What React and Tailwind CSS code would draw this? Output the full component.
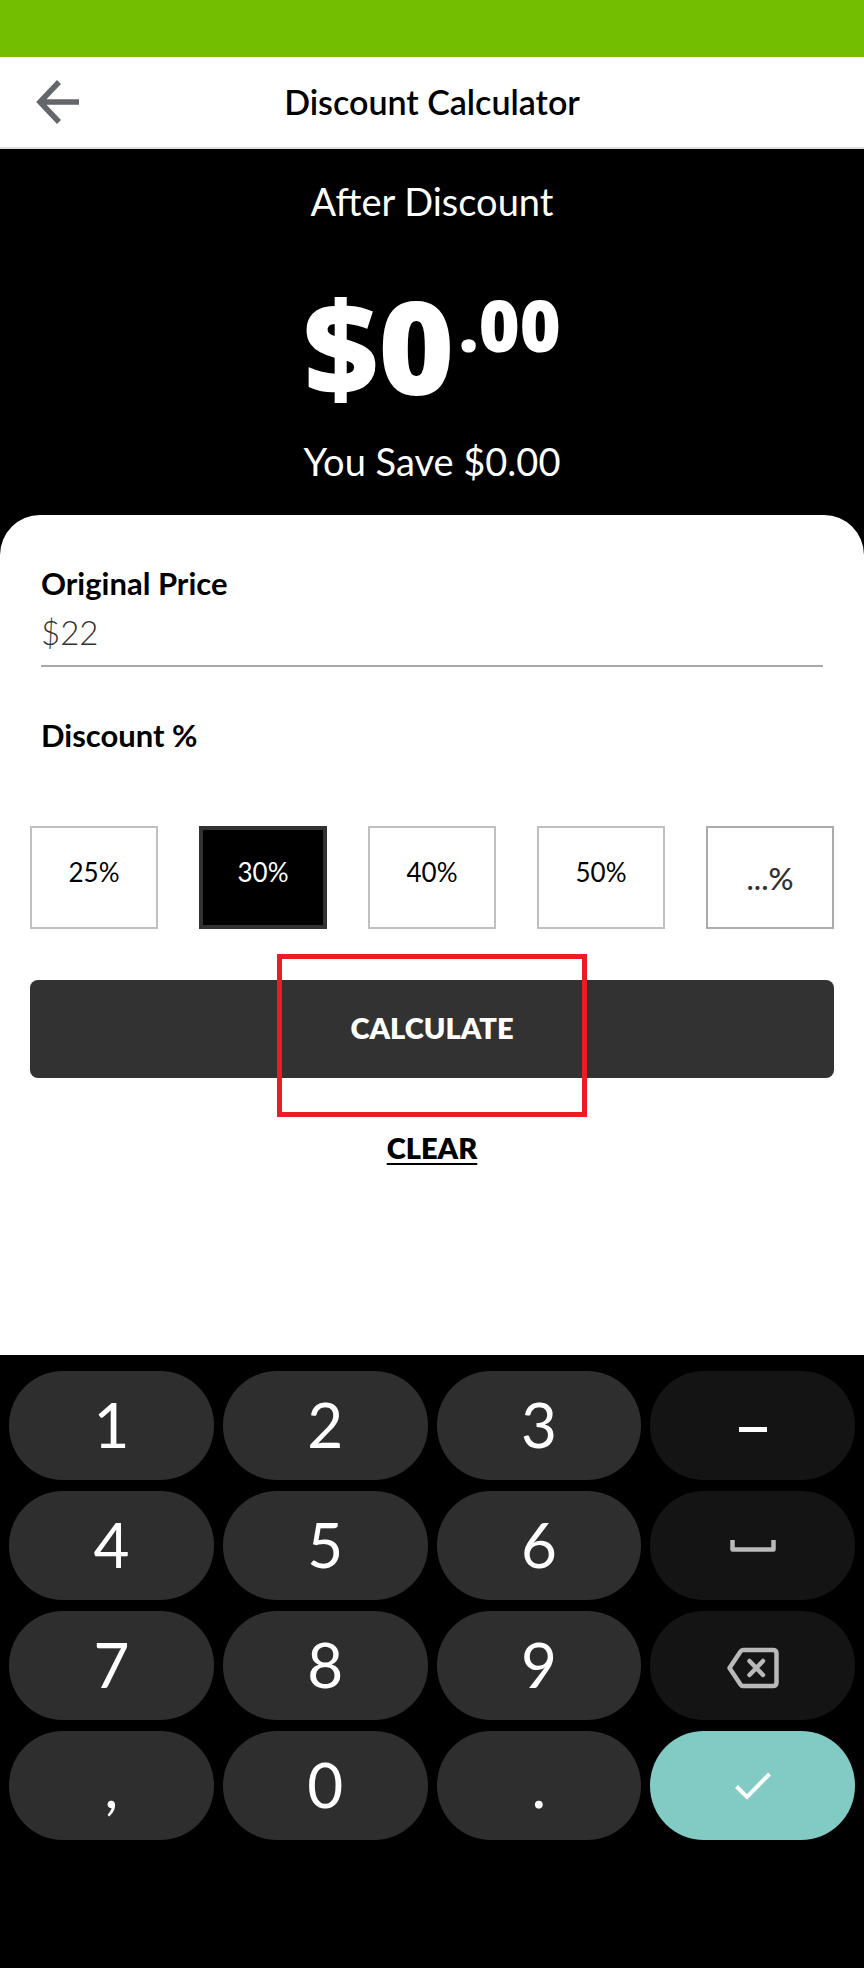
import { useState } from "react";

const PRESETS = [25, 30, 40, 50];

const KEYS = [
  "1", "2", "3", "minus",
  "4", "5", "6", "space",
  "7", "8", "9", "backspace",
  ",", "0", ".", "done",
];

const ICON_KEYS = {
  minus: { label: "Minus", tone: "bg-[#141414]", icon: <MinusIcon /> },
  space: { label: "Space", tone: "bg-[#141414]", icon: <SpaceIcon /> },
  backspace: { label: "Backspace", tone: "bg-[#141414]", icon: <BackspaceIcon /> },
  done: { label: "Done", tone: "bg-[#81cbc4]", icon: <CheckIcon /> },
};

function BackIcon() {
  return (
    <svg width="44" height="44" viewBox="0 0 44 44" fill="none" stroke="#63666a" strokeWidth="5.500" aria-hidden="true">
      <path d="M43 22H4M23 2L4 22L23 42" />
    </svg>
  );
}

function MinusIcon() {
  return (
    <svg className="mt-2" width="28" height="5" viewBox="0 0 28 5" aria-hidden="true">
      <rect width="28" height="5" fill="#fff" />
    </svg>
  );
}

function SpaceIcon() {
  return (
    <svg width="46" height="12" viewBox="0 0 46 12" fill="none" stroke="#b9b9b9" strokeWidth="4.500" strokeLinejoin="round" aria-hidden="true">
      <path d="M2.500 0V9.500H43.500V0" />
    </svg>
  );
}

function BackspaceIcon() {
  return (
    <svg className="mt-1" width="52" height="42" viewBox="0 0 52 42" fill="none" stroke="#b9b9b9" strokeWidth="4.500" strokeLinejoin="round" aria-hidden="true">
      <path d="M16 3H46Q49.500 3 49.500 6.500V35.500Q49.500 39 46 39H16Q14.500 39 13.500 37.500L2.500 21L13.500 4.500Q14.500 3 16 3Z" />
      <path d="M22.500 14L36 28M36 14L22.500 28" strokeLinecap="round" />
    </svg>
  );
}

function CheckIcon() {
  return (
    <svg width="36" height="28" viewBox="0 0 36 28" fill="none" stroke="#fff" strokeWidth="4" aria-hidden="true">
      <path d="M1.500 14.500L12 25L34.500 2" />
    </svg>
  );
}

function Key({ name, onPress }) {
  const special = ICON_KEYS[name];
  return (
    <button
      type="button"
      aria-label={special ? special.label : undefined}
      onClick={() => onPress(name)}
      className={`flex h-[109px] items-center justify-center rounded-[54px] text-[62px] leading-none text-white ${special ? special.tone : "bg-[#2e2e2e] pb-1"}`}
    >
      {special ? special.icon : name}
    </button>
  );
}

export default function App() {
  const [price, setPrice] = useState("$22");
  const [percent, setPercent] = useState(30);
  const [custom, setCustom] = useState("");
  const [result, setResult] = useState({ total: 0, saved: 0 });

  const calculate = () => {
    const amount = parseFloat(price.replace(/[^0-9.]/g, "")) || 0;
    const saved = (amount * (parseFloat(custom) || percent)) / 100;
    setResult({ total: amount - saved, saved });
  };

  const clear = () => {
    setPrice("$");
    setCustom("");
    setResult({ total: 0, saved: 0 });
  };

  const press = (name) => {
    if (name === "done") calculate();
    else if (name === "backspace") setPrice((p) => (p.length > 1 ? p.slice(0, -1) : p));
    else if (/^[0-9.,]$/.test(name)) setPrice((p) => p + name);
  };

  const [whole, cents] = result.total.toFixed(2).split(".");

  return (
    <div className="flex min-h-screen flex-col bg-black font-['Lato',sans-serif] text-black">
      <div className="h-[57px] bg-[#73be00]" />
      <header className="grid h-[92px] grid-cols-[1fr_auto_1fr] items-center border-b-2 border-[#dedede] bg-white px-9">
        <button type="button" aria-label="Back" className="justify-self-start">
          <BackIcon />
        </button>
        <h1 className="text-[34px] leading-10 font-semibold">Discount Calculator</h1>
      </header>

      <section className="flex flex-col items-center pt-[30px] pb-8 text-white">
        <p className="text-[38px] leading-11">After Discount</p>
        <p className="mt-11 flex items-start gap-1 font-['Open_Sans',sans-serif] text-[130px] leading-[156px] font-extrabold">
          ${whole}
          <span className="pt-4 text-[70px] leading-[84px]">.{cents}</span>
        </p>
        <p className="mt-4 text-[38px] leading-11">You Save ${result.saved.toFixed(2)}</p>
      </section>

      <main className="flex flex-col rounded-t-[40px] bg-white px-[30px] pt-12 pb-[187px]">
        <div className="flex flex-col px-[11px]">
          <label htmlFor="price" className="text-[31px] leading-10 font-bold">
            Original Price
          </label>
          <input
            id="price"
            value={price}
            onChange={(e) => setPrice(e.target.value)}
            className="h-16 border-b-2 border-[#a8a8a8] pb-1 text-[33px] font-light text-[#323232] outline-none"
          />
          <h2 className="mt-12 text-[31px] leading-10 font-bold">Discount %</h2>
        </div>

        <div className="mt-[71px] grid grid-cols-5 gap-[41px]">
          {PRESETS.map((value) => (
            <button
              key={value}
              type="button"
              aria-pressed={percent === value}
              onClick={() => setPercent(value)}
              className={`h-[103px] pb-[10px] text-[26px] ${
                percent === value
                  ? "border-4 border-[#323232] bg-black text-white"
                  : "border-2 border-[#c0c0c0] bg-white"
              }`}
            >
              {value}%
            </button>
          ))}
          <input
            aria-label="Custom discount percent"
            placeholder="...%"
            value={custom}
            onChange={(e) => setCustom(e.target.value)}
            className="h-[103px] w-full border-2 border-[#acacac] text-center text-[31px] font-medium text-[#323232] outline-none placeholder:text-[#323232]"
          />
        </div>

        <div className="relative mt-[51px] flex flex-col">
          <button
            type="button"
            onClick={calculate}
            className="h-[98px] rounded-lg bg-[#323232] pb-[2px] text-[29px] font-extrabold text-white"
          >
            CALCULATE
          </button>
          <div className="pointer-events-none absolute -top-[26px] left-1/2 h-[163px] w-[310px] -translate-x-1/2 border-5 border-[#ed1c24]" />
        </div>

        <button
          type="button"
          onClick={clear}
          className="mt-[50px] self-center text-[29px] leading-10 font-extrabold underline decoration-2 underline-offset-4"
        >
          CLEAR
        </button>
      </main>

      <div className="grid grid-cols-4 gap-x-[9px] gap-y-[11px] px-[9px] pt-4 pb-[126px]">
        {KEYS.map((name) => (
          <Key key={name} name={name} onPress={press} />
        ))}
      </div>
    </div>
  );
}
